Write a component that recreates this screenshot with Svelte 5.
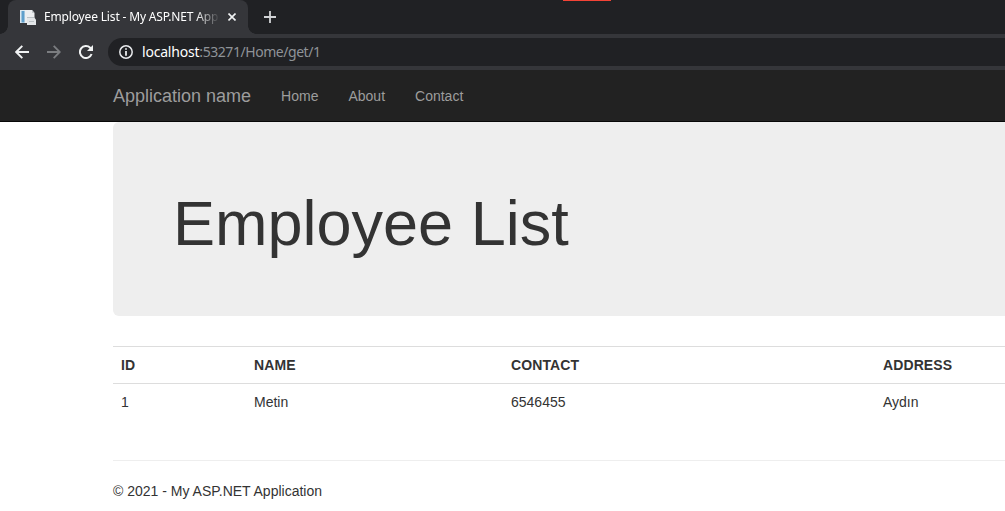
<script>
  const links = ['Home', 'About', 'Contact'];
  const columns = ['ID', 'NAME', 'CONTACT', 'ADDRESS'];
  const employees = [['1', 'Metin', '6546455', 'Aydın']];
</script>

<div class="window">
  <header class="chrome">
    <div class="tabs">
      <div class="tab">
        <svg class="favicon" width="16" height="17" viewBox="0 0 16 17">
          <path d="M0 1h5v13H0z" fill="#dbe8f0" />
          <path d="M1.5 2h3v11.5h-3z" fill="#5f9fcb" />
          <path d="M5 1h7l2.5 3v10H5z" fill="#eceef0" />
          <path d="M12 1v3h2.5z" fill="#c3c8cb" />
          <path d="M7 8.5h7l2 2V16H7z" fill="#e3e6e8" />
          <path d="M7 8.5h7M9 12.5h5" fill="none" stroke="#bcc2c6" />
        </svg>
        <span class="title">Employee List - My ASP.NET Appl</span>
        <svg class="close" width="8" height="8" viewBox="0 0 8 8"><path d="M.5.5l7 7M7.5.5l-7 7" stroke="#f1f3f4" stroke-width="1.6" /></svg>
      </div>
      <svg class="plus" width="12" height="12" viewBox="0 0 12 12"><path d="M6 0v12M0 6h12" stroke="#d2d4d6" stroke-width="1.8" /></svg>
      <i class="marker"></i>
    </div>
    <div class="toolbar">
      <svg width="14" height="14" viewBox="0 0 14 14"><path d="M14 7H1.5M7.3.8L1.2 7l6.1 6.2" fill="none" stroke="#f1f3f4" stroke-width="1.9" /></svg>
      <svg width="14" height="14" viewBox="0 0 14 14"><path d="M0 7h12.5M6.7.8L12.8 7l-6.1 6.2" fill="none" stroke="#7b7d80" stroke-width="1.8" /></svg>
      <svg width="14" height="14" viewBox="0 0 14 14"><path d="M12.6 9A6 6 0 1 1 11.2 2.8L12.4 4" fill="none" stroke="#f1f3f4" stroke-width="2" /><path d="M14 0v6H8z" fill="#f1f3f4" /></svg>
      <div class="address">
        <svg width="14" height="14" viewBox="0 0 14 14"><circle cx="7" cy="7" r="6.2" fill="none" stroke="#e8eaed" stroke-width="1.5" /><path d="M7 3.2v1.6M7 6v4.8" stroke="#e8eaed" stroke-width="1.8" /></svg>
        <span class="url"><b>localhost</b>:53271/Home/get/1</span>
      </div>
    </div>
  </header>

  <nav>
    <a class="brand" href="#top">Application name</a>
    {#each links as link}
      <a href="#{link}">{link}</a>
    {/each}
  </nav>

  <main>
    <section class="jumbotron"><h1>Employee List</h1></section>
    <table>
      <colgroup><col class="id" /><col class="name" /><col class="contact" /><col /></colgroup>
      <thead><tr>{#each columns as column}<th>{column}</th>{/each}</tr></thead>
      <tbody>
        {#each employees as employee}
          <tr>{#each employee as value}<td>{value}</td>{/each}</tr>
        {/each}
      </tbody>
    </table>
    <footer>© 2021 - My ASP.NET Application</footer>
  </main>
</div>

<style>
  :global(body) { margin: 0; background: #fff; }
  .window {
    width: 100%; height: 511px; overflow: hidden; background: #fff;
    font: 14px/20px "Liberation Sans", Arial, sans-serif; color: #333;
  }
  svg { display: block; flex: none; }
  .chrome { height: 70px; background: #35363a; font-family: "Noto Sans", "Open Sans", sans-serif; }
  .tabs { position: relative; display: flex; height: 34px; background: #202124; padding-left: 8px; }
  .tab {
    position: relative; box-sizing: border-box; display: flex; align-items: center; width: 240px; height: 34px;
    padding-left: 12px; background: #35363a; border-radius: 8px 8px 0 0;
  }
  .tab::before, .tab::after { content: ""; position: absolute; bottom: 0; width: 8px; height: 8px; }
  .tab::before { left: -8px; background: radial-gradient(circle at 0 0, #202124 7.5px, #35363a 8px); }
  .tab::after { right: -8px; background: radial-gradient(circle at 100% 0, #202124 7.5px, #35363a 8px); }
  .title {
    width: 175px; margin-left: 8px; overflow: hidden; white-space: nowrap;
    font-size: 12px; line-height: 18px; letter-spacing: -0.16px; color: #fff;
    -webkit-mask-image: linear-gradient(90deg, #000 152px, transparent 176px);
    mask-image: linear-gradient(90deg, #000 152px, transparent 176px);
  }
  .close { margin-left: 9px; }
  .plus { margin: 11px 0 0 16px; }
  .marker { position: absolute; top: 0; left: 563px; width: 48px; height: 1px; background: #f44336; }
  .toolbar { display: flex; align-items: center; gap: 18px; height: 36px; padding-left: 15px; }
  .address {
    box-sizing: border-box; display: flex; align-items: center; flex: 1; height: 28px; margin-left: -3px;
    padding-left: 11px; background: #202124; border-radius: 14px 0 0 14px;
  }
  .url { margin-left: 9px; font-size: 14px; letter-spacing: -0.45px; color: #8f9398; white-space: nowrap; }
  .url b { font-weight: 400; letter-spacing: -0.2px; color: #fff; }
  nav {
    box-sizing: border-box; display: flex; height: 52px; padding: 1px 0 0 98px;
    background: #222; border-bottom: 1px solid #080808;
  }
  nav a { padding: 15px; color: #9d9d9d; text-decoration: none; white-space: nowrap; }
  nav .brand { font-size: 18px; }
  main { padding-left: 113px; }
  .jumbotron { box-sizing: border-box; height: 194px; padding: 67px 60px 0; background: #eee; border-radius: 6px 0 0 6px; }
  h1 { margin: 0; font-size: 63px; line-height: 69px; font-weight: 400; white-space: nowrap; }
  table { width: 100%; margin-top: 30px; table-layout: fixed; border-collapse: separate; border-spacing: 0; }
  .id { width: 133px; }
  .name { width: 257px; }
  .contact { width: 372px; }
  th, td { padding: 8px; border-top: 1px solid #ddd; text-align: left; line-height: 20px; }
  th { letter-spacing: 0.1px; }
  footer { margin-top: 40px; padding-top: 20px; border-top: 1px solid #eee; }
</style>
